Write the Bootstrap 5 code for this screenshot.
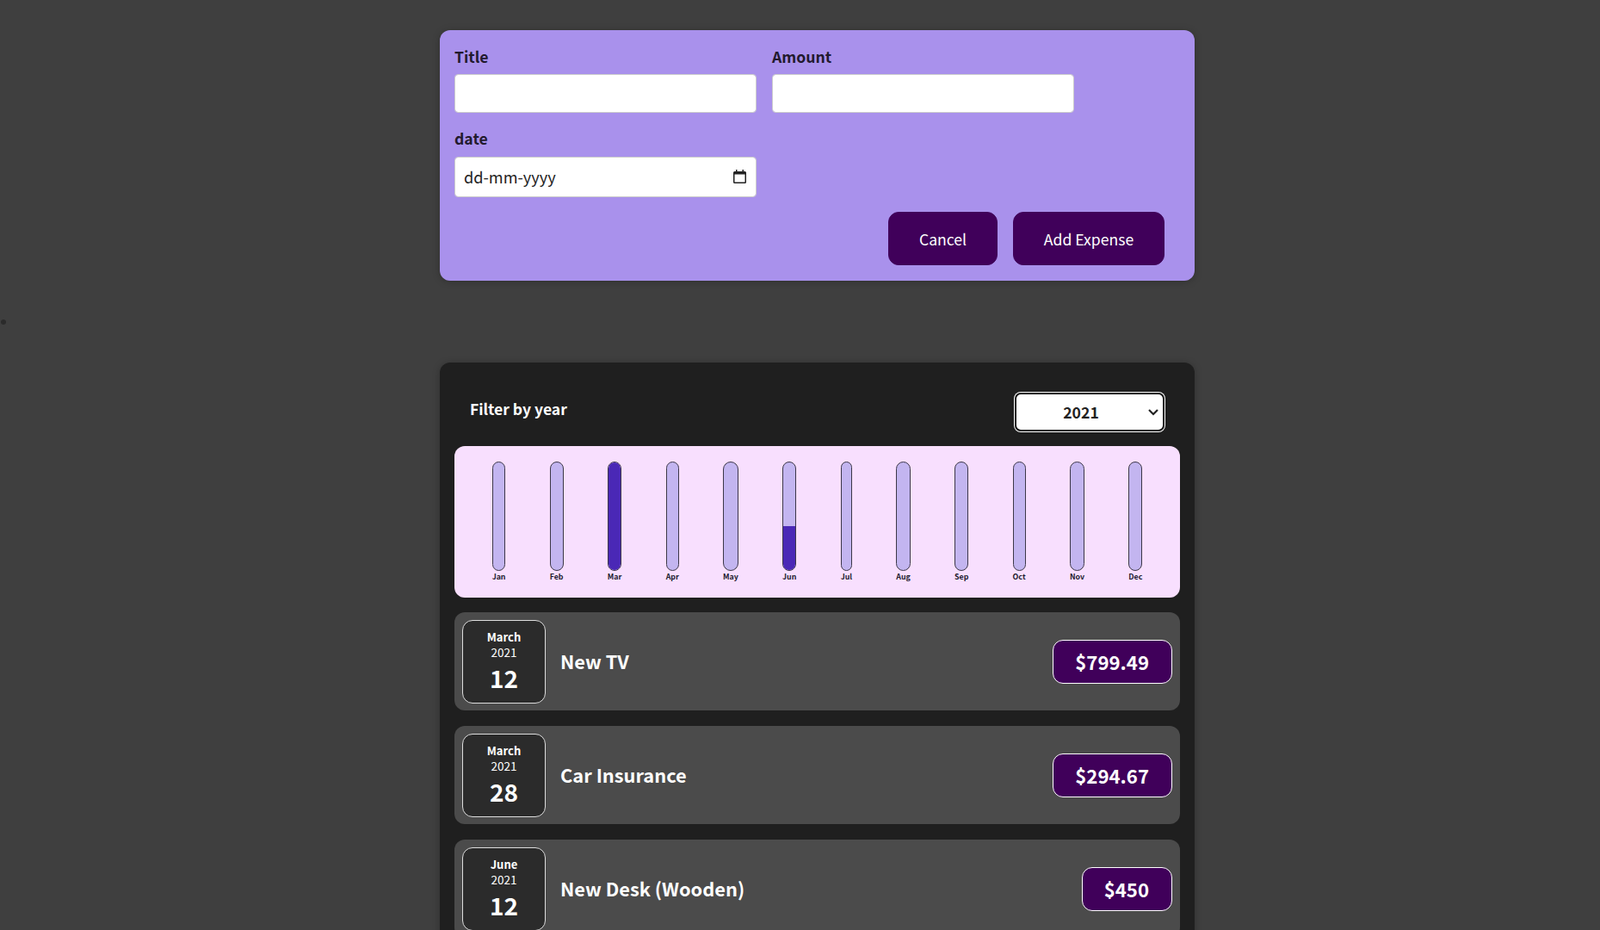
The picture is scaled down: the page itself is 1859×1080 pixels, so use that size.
<!DOCTYPE html>
<html lang="en">
<head>
  <meta charset="UTF-8">
  <title>Expenses</title>
  <link href="https://cdn.jsdelivr.net/npm/bootstrap@5.3.0/dist/css/bootstrap.min.css" rel="stylesheet">
  <style>
    html, body { height: 100%; overflow: hidden; }
    body {
      background-color: #3f3f3f;
      font-family: "Noto Sans CJK SC", "Noto Sans", sans-serif;
      padding-left: 40px;
    }
    .page-wrap { width: 877px; margin: 0 auto; padding-top: 35px; }
    .stray-dot {
      position: absolute; left: 1px; top: 371px;
      width: 6px; height: 6px; border-radius: 50%;
      background-color: #2b2b2b;
    }

    .form-panel {
      background-color: #a991ec;
      border-radius: 12px;
      padding: 18px 18px 18px 17px;
      box-shadow: 0 1px 8px rgba(0, 0, 0, .25);
    }
    .form-fields { gap: 17px 18px; }
    .field-box { width: 351px; }
    .field-label {
      display: block;
      font-size: 17.6px;
      font-weight: 600;
      line-height: 26px;
      color: #221a2e;
      margin-bottom: 7px;
    }
    .field-input {
      height: 45px;
      border: 1px solid #ccc;
      border-radius: 4px;
      font-size: 18.2px;
      padding: 0 10px;
      color: #222;
    }
    .date-wrap { position: relative; margin-top: 8px; }
    .date-wrap .field-input { height: 47px; padding-bottom: 2px; }
    .date-wrap .field-input::placeholder { color: #222; opacity: 1; }
    .date-icon { position: absolute; right: 12px; top: 15px; }
    .form-actions { gap: 18px; margin-top: 17px; padding-right: 17px; }
    .btn-expense {
      height: 62px;
      background-color: #40005a;
      border: 1px solid #40005a;
      border-radius: 12px;
      color: #fff;
      font-size: 17.6px;
      padding: 2px 0 0;
    }
    .btn-expense:hover { background-color: #510674; color: #fff; }
    .btn-cancel { width: 127px; }
    .btn-add { width: 176px; }

    .list-panel {
      background-color: #1f1f1f;
      border-radius: 12px;
      padding: 18px 17px;
      margin-top: 95px;
      box-shadow: 0 1px 8px rgba(0, 0, 0, .25);
    }
    .filter-head { padding: 16px 17px 16px 18px; }
    .filter-title { color: #fff; font-size: 17.5px; font-weight: 700; margin-bottom: 7px; }
    .year-select {
      background-image: url("data:image/svg+xml,%3csvg xmlns='http://www.w3.org/2000/svg' viewBox='0 0 12 8'%3e%3cpath fill='none' stroke='%23222' stroke-width='2.200' d='M1 1l5 5 5-5'/%3e%3c/svg%3e");
      background-position: right 5px center;
      background-size: 12px 8px;
      width: 174px;
      height: 45px;
      margin: 1px;
      border: 2px solid #111;
      border-radius: 7px;
      box-shadow: 0 0 0 1px #fff;
      font-size: 17.6px;
      font-weight: 600;
      color: #222;
      text-align: center;
      padding: 0 20px 0 0;
      line-height: 41px;
    }

    .chart-box {
      background-color: #f8dffe;
      border-radius: 12px;
      padding: 18px;
    }
    .chart-col { display: flex; flex-direction: column; align-items: stretch; }
    .bar-track {
      height: 127px;
      background-color: #c3b5f0;
      border: 1px solid #3d3848;
      border-radius: 12px;
      overflow: hidden;
      display: flex;
      flex-direction: column;
      justify-content: flex-end;
    }
    .bar-fill { background-color: #4a28b6; }
    .bar-label {
      font-size: 8.8px;
      font-weight: 600;
      line-height: 13px;
      color: #221a2e;
      text-align: center;
    }

    .expense-row {
      background-color: #4b4b4b;
      border-radius: 12px;
      padding: 9px;
      margin-top: 18px;
      height: 114px;
    }
    .chart-box + .expense-row { margin-top: 17px; }
    .date-box {
      width: 97px;
      height: 97px;
      flex-shrink: 0;
      background-color: #2b2b2b;
      border: 1px solid #ddd;
      border-radius: 12px;
      color: #fff;
      text-align: center;
      margin-right: 17px;
    }
    .date-month { font-size: 13px; font-weight: 700; line-height: 21px; margin-bottom: -2px; }
    .date-year { font-size: 13.5px; line-height: 19px; }
    .date-day { font-size: 28px; font-weight: 700; line-height: 40px; }
    .expense-title { color: #fff; font-size: 21.8px; font-weight: 700; margin: 0; }
    .price-tag {
      background-color: #40005a;
      border: 1px solid #fff;
      border-radius: 12px;
      color: #fff;
      font-size: 22.2px;
      font-weight: 700;
      line-height: 49px;
      padding: 0 26px 0 25px;
    }
  </style>
</head>
<body>

<span class="stray-dot"></span>

<div class="page-wrap">
  <div class="form-panel">
    <form>
      <div class="d-flex flex-wrap form-fields">
        <div class="field-box">
          <label class="field-label" for="title">Title</label>
          <input type="text" class="form-control field-input" id="title">
        </div>
        <div class="field-box">
          <label class="field-label" for="amount">Amount</label>
          <input type="text" class="form-control field-input" id="amount">
        </div>
        <div class="field-box">
          <label class="field-label" for="date">date</label>
          <div class="date-wrap">
            <input type="text" class="form-control field-input" id="date" placeholder="dd-mm-yyyy">
            <svg class="date-icon" width="15" height="16" viewBox="0 0 15 16">
              <path fill="#222" d="M3 0h1.500v2h6V0H12v2h1.500A1.500 1.500 0 0 1 15 3.500v11a1.500 1.500 0 0 1-1.500 1.500h-12A1.500 1.500 0 0 1 0 14.500v-11A1.500 1.500 0 0 1 1.500 2H3V0zM1.500 5.500v9h12v-9h-12z"/>
            </svg>
          </div>
        </div>
      </div>
      <div class="d-flex justify-content-end form-actions">
        <button type="button" class="btn btn-expense btn-cancel">Cancel</button>
        <button type="button" class="btn btn-expense btn-add">Add Expense</button>
      </div>
    </form>
  </div>

  <div class="list-panel">
    <div class="d-flex justify-content-between align-items-center filter-head">
      <label class="filter-title" for="year">Filter by year</label>
      <select class="form-select year-select" id="year">
        <option>2021</option>
        <option>2020</option>
        <option>2019</option>
      </select>
    </div>

    <div class="d-flex justify-content-around chart-box" id="chart"></div>

    <div class="d-flex align-items-center expense-row">
      <div class="d-flex flex-column justify-content-center date-box">
        <div class="date-month">March</div>
        <div class="date-year">2021</div>
        <div class="date-day">12</div>
      </div>
      <h2 class="expense-title flex-grow-1">New TV</h2>
      <div class="price-tag">$799.49</div>
    </div>

    <div class="d-flex align-items-center expense-row">
      <div class="d-flex flex-column justify-content-center date-box">
        <div class="date-month">March</div>
        <div class="date-year">2021</div>
        <div class="date-day">28</div>
      </div>
      <h2 class="expense-title flex-grow-1">Car Insurance</h2>
      <div class="price-tag">$294.67</div>
    </div>

    <div class="d-flex align-items-center expense-row">
      <div class="d-flex flex-column justify-content-center date-box">
        <div class="date-month">June</div>
        <div class="date-year">2021</div>
        <div class="date-day">12</div>
      </div>
      <h2 class="expense-title flex-grow-1">New Desk (Wooden)</h2>
      <div class="price-tag">$450</div>
    </div>
  </div>
</div>

<script>
const months = ["Jan", "Feb", "Mar", "Apr", "May", "Jun", "Jul", "Aug", "Sep", "Oct", "Nov", "Dec"];
const fills = { Mar: 100, Jun: 41 };

document.getElementById("chart").innerHTML = months.map(m => `
  <div class="chart-col">
    <div class="bar-track"><div class="bar-fill" style="height: ${fills[m] || 0}%"></div></div>
    <div class="bar-label">${m}</div>
  </div>
`).join("");
</script>

</body>
</html>
